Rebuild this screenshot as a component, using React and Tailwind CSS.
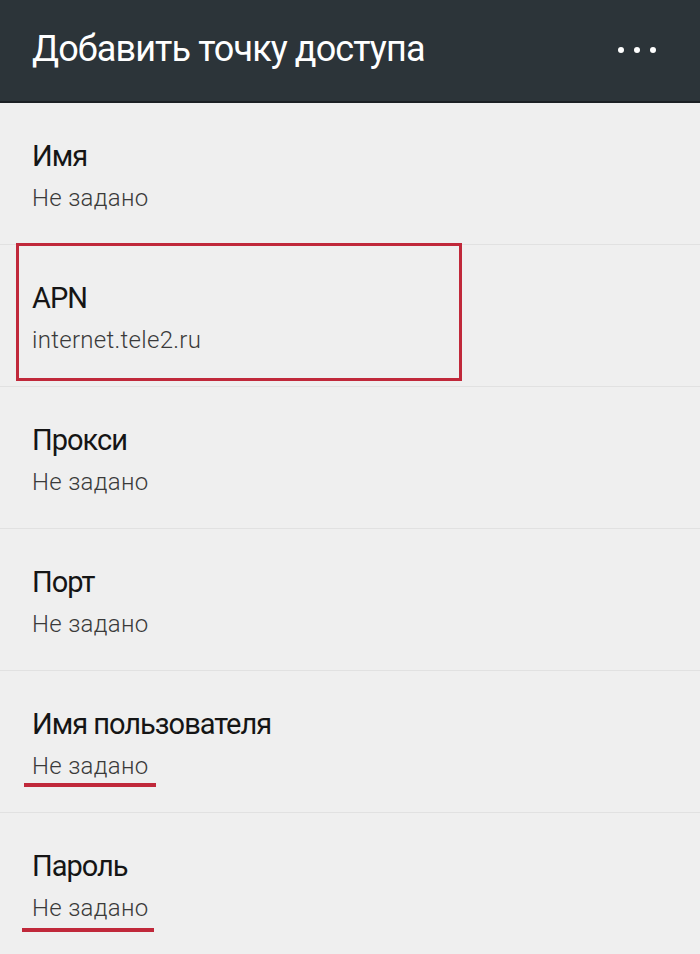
import React from 'react'

const ROWS = [
  { title: 'Имя', value: 'Не задано' },
  { title: 'APN', value: 'internet.tele2.ru', box: true },
  { title: 'Прокси', value: 'Не задано' },
  { title: 'Порт', value: 'Не задано' },
  { title: 'Имя пользователя', value: 'Не задано', underline: 'top-[112px] left-[24px]' },
  { title: 'Пароль', value: 'Не задано', underline: 'top-[115px] left-[22px]' },
]

export default function App() {
  return (
    <div className="w-[700px] h-[954px] overflow-hidden bg-[#efefef]" style={{ fontFamily: 'Roboto, "Noto Sans", sans-serif' }}>
      {/* Toolbar */}
      <div className="h-[103px] bg-[#2c3439] border-b-2 border-[#1b2024] flex items-center pl-[32px] pr-[44px]">
        <h1 className="flex-1 text-white text-[36px] leading-[44px] tracking-[-0.9px] pb-[4px]">Добавить точку доступа</h1>
        <div className="flex gap-[10px] pb-[2px]">
          <span className="w-[6px] h-[6px] rounded-full bg-white" />
          <span className="w-[6px] h-[6px] rounded-full bg-white" />
          <span className="w-[6px] h-[6px] rounded-full bg-white" />
        </div>
      </div>

      {/* Preferences */}
      {ROWS.map(row => (
        <div key={row.title} className="relative h-[142px] border-b border-[#e1e1e1] px-[32px] pt-[35px]">
          <p className="text-[29px] leading-[37px] tracking-[-1px] text-[#151515]">{row.title}</p>
          <p className="mt-[8px] text-[24px] leading-[30px] tracking-[0.3px] font-light text-[#3a3a3a]">{row.value}</p>
          {row.box && (
            <div className="absolute top-[-2px] left-[16px] w-[446px] h-[138px] border-[3px] border-[#c0283a]" />
          )}
          {row.underline && (
            <div className={`absolute ${row.underline} w-[132px] h-[4px] bg-[#c0283a]`} />
          )}
        </div>
      ))}
    </div>
  )
}
